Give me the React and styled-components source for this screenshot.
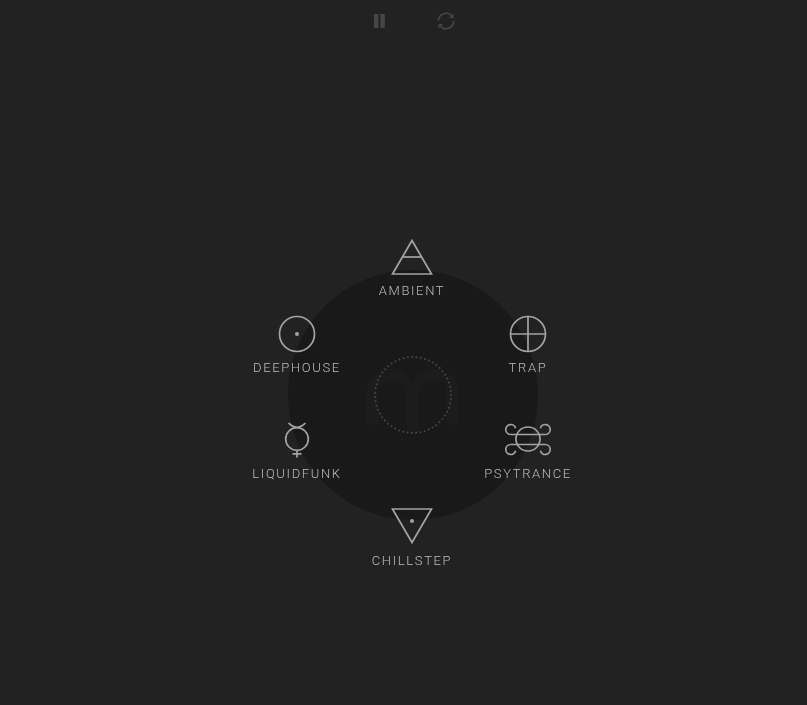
import React from "react";
import styled, { createGlobalStyle } from "styled-components";

const Global = createGlobalStyle`
  html, body { margin: 0; padding: 0; height: 100%; background: #222222; overflow: hidden; }
`;

const Page = styled.main`
  width: 807px;
  height: 705px;
  display: flex;
  flex-direction: column;
  align-items: center;
  background: #222222;
  font-family: "Roboto", "Liberation Sans", sans-serif;
`;

const Controls = styled.nav`
  width: 100%;
  height: 42px;
  display: flex;
  justify-content: center;
  align-items: center;
  gap: 44px;
  padding-left: 18px;
  box-sizing: border-box;
`;

const ControlButton = styled.button`
  width: 22px;
  height: 22px;
  padding: 0;
  border: 0;
  background: none;
  display: flex;
  align-items: center;
  justify-content: center;
  color: #464646;
`;

const Stage = styled.section`
  position: relative;
  width: 807px;
  flex: 1;
`;

const Disc = styled.div`
  position: absolute;
  left: 288px;
  top: 228px;
  width: 250px;
  height: 250px;
  border-radius: 50%;
  background: #191919;
  display: flex;
  align-items: center;
  justify-content: center;
`;

const Node = styled.button`
  position: absolute;
  left: ${(p) => p.$x - 60}px;
  top: ${(p) => p.$y}px;
  width: 120px;
  will-change: transform;
  padding: 0;
  border: 0;
  background: none;
  display: flex;
  flex-direction: column;
  align-items: center;
  gap: ${(p) => p.$gap}px;
  font-family: inherit;
`;

const Glyph = styled.svg`
  display: block;
  width: 48px;
  height: 40px;
  fill: none;
  stroke: #a3a3a3;
  stroke-width: 1.7;
`;

const Label = styled.span`
  font-size: 13px;
  font-weight: 300;
  line-height: 14px;
  letter-spacing: 1.65px;
  white-space: nowrap;
  color: #bcbcbc;
`;

const Dot = styled.circle`
  fill: #a3a3a3;
  stroke: none;
`;

const genres = [
  { name: "AMBIENT", x: 412, y: 196, gap: 6, icon: (
    <>
      <path d="M24 2.5 L43.5 36 H4.5 Z" />
      <path d="M14 19 H34" />
    </>
  ) },
  { name: "DEEPHOUSE", x: 297, y: 272, gap: 7, icon: (
    <>
      <circle cx="24" cy="20" r="17.5" />
      <Dot cx="24" cy="20" r="2" />
    </>
  ) },
  { name: "TRAP", x: 528, y: 272, gap: 7, icon: (
    <>
      <circle cx="24" cy="20" r="17.5" />
      <path d="M24 2.5 V37.5 M6.5 20 H41.5" />
    </>
  ) },
  { name: "LIQUIDFUNK", x: 297, y: 377, gap: 8, icon: (
    <>
      <circle cx="24" cy="20" r="11.3" />
      <path d="M15.5 4 Q19 7.8 24 8.5 Q29 7.8 32.5 4" />
      <path d="M24 31.3 V38.5 M19.5 34.8 H28.5" />
    </>
  ) },
  { name: "PSYTRANCE", x: 528, y: 377, gap: 8, icon: (
    <>
      <circle cx="24" cy="20" r="12" />
      <path d="M6.8 15.5 H41.2 M6.8 25.5 H41.2" />
      <path d="M6.8 15.5 A5 5 0 1 1 11.6 9.2" />
      <path d="M41.2 15.5 A5 5 0 1 0 36.4 9.2" />
      <path d="M6.8 25.5 A5 5 0 1 0 11.6 31.8" />
      <path d="M41.2 25.5 A5 5 0 1 1 36.4 31.8" />
    </>
  ) },
  { name: "CHILLSTEP", x: 412, y: 464, gap: 8, icon: (
    <>
      <path d="M4.5 3 H43.5 L24 36.5 Z" />
      <Dot cx="24" cy="15" r="2" />
    </>
  ) },
];

function Emblem() {
  return (
    <svg width="100" height="84" viewBox="0 0 100 84">
      <path d="M4 72 V38 C4 24 16 16 28 16 C38 16 46 22 50 30 C54 22 62 16 72 16 C84 16 96 24 96 38 V72 H84 V38 C84 32 78 28 72 28 C62 28 56 34 56 44 V80 H44 V44 C44 34 38 28 28 28 C22 28 16 32 16 38 V72 Z" fill="#1c1c1c" />
      <circle cx="50" cy="42" r="38" fill="none" stroke="#474747" strokeWidth="2" strokeLinecap="round" strokeDasharray="0 4.34" />
    </svg>
  );
}

export default function App() {
  return (
    <Page>
      <Global />
      <Controls>
        <ControlButton aria-label="Pause">
          <svg width="14" height="16" viewBox="0 0 14 16" fill="currentColor">
            <rect x="1" y="1" width="4.4" height="14" />
            <rect x="7.4" y="1" width="4.4" height="14" />
          </svg>
        </ControlButton>
        <ControlButton aria-label="Refresh">
          <svg width="22" height="22" viewBox="0 0 22 22" fill="none" stroke="currentColor" strokeWidth="1.7">
            <path d="M3.3 11 A7.8 7.8 0 0 1 16.5 5.5" />
            <path d="M18.7 11 A7.8 7.8 0 0 1 5.5 16.5" />
            <path d="M18.5 3.5 V8 H14 Z" fill="currentColor" stroke="none" />
            <path d="M3.5 18.5 V14 H8 Z" fill="currentColor" stroke="none" />
          </svg>
        </ControlButton>
      </Controls>
      <Stage>
        <Disc>
          <Emblem />
        </Disc>
        {genres.map((g) => (
          <Node key={g.name} $x={g.x} $y={g.y} $gap={g.gap}>
            <Glyph viewBox="0 0 48 40">{g.icon}</Glyph>
            <Label>{g.name}</Label>
          </Node>
        ))}
      </Stage>
    </Page>
  );
}
